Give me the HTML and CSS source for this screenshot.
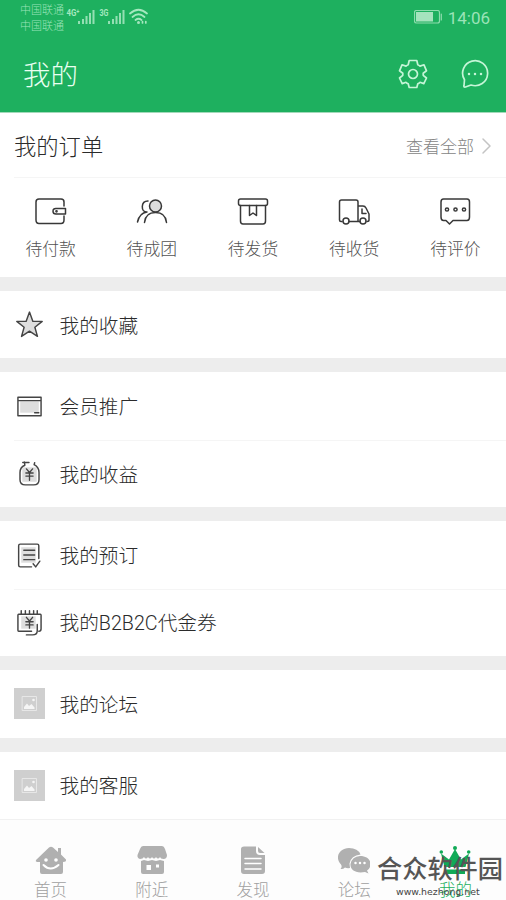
FILE: index.html
```html
<!DOCTYPE html>
<html lang="zh-CN">
<head>
<meta charset="utf-8">
<title>我的</title>
<link rel="stylesheet" href="styles.css">
</head>
<body>
<header class="top">
  <div class="status">
    <div class="carrier"><span>中国联通</span><span>中国联通</span></div>
    <svg class="signals" width="84" height="20" viewBox="66 6 84 20">
      <g class="net"><text x="66.500" y="16" textLength="13" lengthAdjust="spacingAndGlyphs">4G⁺</text><text x="99.500" y="16" textLength="9" lengthAdjust="spacingAndGlyphs">3G</text></g>
      <path class="bars" d="M79 24v-3M83 24v-5M86.500 24v-8M90 24v-11M93.500 24v-14M109 24v-3M113 24v-5M116.500 24v-8M120 24v-11M123.500 24v-14"/>
      <path class="wifi" d="M130 13.500Q138.500 6 147 13.500M132.500 17Q138.500 11.500 144.500 17M135.500 20Q138.500 17.500 141.500 20"/>
      <circle class="dot" cx="138.500" cy="22.500" r="1.500"/><path class="wifi" d="M142.500 21.500v1.500M145.800 21.500v1.500"/>
    </svg>
    <div class="power">
      <svg width="28" height="14" viewBox="414 10 28 14"><rect class="shell" x="414.500" y="10.500" width="25" height="12.500" rx="2"/><rect class="dot" x="416" y="12" width="17" height="9.500"/><path class="shell" d="M441.300 14v6"/></svg>
      <span>14:06</span>
    </div>
  </div>
  <div class="titlebar">
    <h1>我的</h1>
    <svg class="hicon gear" width="30" height="30" viewBox="-15 -15 30 30"><path d="M-3.800-13.500H3.800L4.800-9.200Q6-8.700 7-7.900L11-9.200L13.500-3.200L10.200-.8V1.300L13.500 4L10.800 9.600L7 8.300Q6 9.200 4.800 9.700L3.800 13.500H-3.800L-4.800 9.700Q-6 9.200-7 8.300L-10.800 9.600L-13.500 4L-10.200 1.300V-.8L-13.500-3.200L-11-9.200L-7-7.900Q-6-8.700-4.800-9.200Z"/><circle r="4.500"/></svg>
    <svg class="hicon" width="30" height="30" viewBox="-15 -15 30 30"><path d="M-10.500 5.800A12.500 12.500 0 1 1-4 11L-9.500 13Q-11.500 13.500-11 11.500Z"/><path class="ellipsis" d="M-6 0h.01M0 0h.01M6 0h.01"/></svg>
  </div>
</header>
<main>
  <section class="orders">
    <div class="orders-head"><h2>我的订单</h2><a>查看全部</a><svg width="12" height="18" viewBox="0 0 12 18"><path d="M2 2L9 9L2 16"/></svg></div>
    <div class="steps">
      <div class="step"><svg viewBox="0 0 34 30"><path d="M30 9V5Q30 2 27 2H5Q2 2 2 5V23Q2 26.500 5 26.500H27Q30 26.500 30 23V19"/><path d="M22 11.500H31.500V17H22Q19 17 19 14.200T22 11.500Z"/><circle cx="22.500" cy="14.300" r=".6"/></svg><span>待付款</span></div>
      <div class="step"><svg viewBox="0 0 34 30"><circle class="tint" cx="20.500" cy="9" r="6"/><path d="M9.500 25.500Q10.500 15.500 20.500 15.500T31.500 25.500M13 4Q7.500 4 7.300 9.500T12 15Q4.500 16 2.500 25"/></svg><span>待成团</span></div>
      <div class="step"><svg viewBox="0 0 34 30"><rect x="2.500" y="2" width="29" height="6.500" rx="2"/><path d="M4.500 8.500V24Q4.500 27 7 27H27Q29.500 27 29.500 24V8.500M13.500 8.500V18.500L17 16L20.500 18.500V8.500"/></svg><span>待发货</span></div>
      <div class="step"><svg viewBox="0 0 34 30"><path d="M5 24.500H4Q2.500 24.500 2.500 23V5Q2.500 3 4.500 3H19Q21 3 21 5V24.500M12 24.500H23M21 9H26Q28 9 29 11L32 17V23Q32 24.500 30 24.500M25 12V16.500H29"/><circle cx="9" cy="24" r="3"/><circle cx="26" cy="24" r="3"/></svg><span>待收货</span></div>
      <div class="step"><svg viewBox="0 0 34 30"><path d="M5.500 2H29Q31.500 2 31.500 5V20Q31.500 23.500 29 23.500H15L11.500 27L8 23.500H5.500Q3 23.500 3 20V5Q3 2 5.500 2Z"/><circle cx="9" cy="12.500" r="1.600"/><circle cx="17.500" cy="12.500" r="1.600"/><circle cx="26" cy="12.500" r="1.600"/></svg><span>待评价</span></div>
    </div>
  </section>
  <section class="group">
    <div class="row"><svg viewBox="0 0 30 30"><path class="tint" d="M15 3L18.300 12H27.300L20.200 17.700L22.700 26.500L15 21.500L7.300 26.500L9.800 17.700L2.700 12H11.700Z"/></svg><span>我的收藏</span></div>
  </section>
  <section class="group">
    <div class="row"><svg viewBox="0 0 30 30"><path class="fill" d="M6 10H24V21H6Z"/><path d="M3.800 6H26.200V24H3.800ZM3.800 9.300H26.200M20 21H24"/></svg><span>会员推广</span></div>
    <div class="row"><svg viewBox="0 0 30 30"><path class="fill" d="M8 9H22V23H8Z"/><path d="M10 3.800L10.500 7Q5.800 9 5.800 14V21Q5.800 26 11 26H19Q24.200 26 24.200 21V14Q24.200 9 19.500 6.500M8.500 4.300H14.500M19.500 6.500L20 4.500"/><path class="yen" d="M12 10.500L15 14L18 10.500M11.500 14.500H18.500M11.500 17.500H18.500M15 14V21.500"/></svg><span>我的收益</span></div>
  </section>
  <section class="group">
    <div class="row"><svg viewBox="0 0 30 30"><path class="fill" d="M7 7H21V22H7Z"/><path d="M24 18V5.500Q24 4 22.500 4H6Q4.500 4 4.500 5.500V24.500Q4.500 26 6 26H17M18.500 23L21 26L25 20.500M9.500 10H20M9.500 14.500H20M9.500 19H20"/></svg><span>我的预订</span></div>
    <div class="row"><svg viewBox="0 0 30 30"><path class="fill" d="M7 9H21V21H7Z"/><path d="M17 23.500H4.500Q3.800 23.500 3.800 22.500V8Q3.800 7 4.500 7H25.500Q26.200 7 26.200 8V21Q26.200 23.500 24 23.500M7 3.500V7M11 3.500V7M15 3.500V7M19 3.500V7M22.500 3.500V7M22.500 17V23Q22.500 27 18 27H12"/><path class="yen" d="M12 10L15 13.500L18 10M11.500 14.300H18.500M11.500 17.300H18.500M15 13.500V20.500"/></svg><span>我的B2B2C代金券</span></div>
  </section>
  <section class="group">
    <div class="row"><svg class="photo" viewBox="0 0 31 31"><rect x="8.500" y="8.500" width="14" height="14"/><path d="M10 21V19L13 15.500L15 18L17.500 16L20.500 19.500V21Z"/><circle cx="19.500" cy="12" r="1.300"/></svg><span>我的论坛</span></div>
  </section>
  <section class="group">
    <div class="row"><svg class="photo" viewBox="0 0 31 31"><rect x="8.500" y="8.500" width="14" height="14"/><path d="M10 21V19L13 15.500L15 18L17.500 16L20.500 19.500V21Z"/><circle cx="19.500" cy="12" r="1.300"/></svg><span>我的客服</span></div>
  </section>
</main>
<nav class="tabs">
  <div class="tab"><svg viewBox="0 0 32 30"><path d="M1 15L14 2.500Q16 1 18 2.500L23 7V3H26V9.500L31 14.500Q31.500 17 28 17V27Q28 29 26 29H7Q5 29 5 27V17H2Q0 16.500 1 15Z"/><path class="cutline" d="M8.500 20Q15.500 27 23.500 20"/><circle class="cut" cx="11" cy="15" r="1.800"/><circle class="cut" cx="21" cy="15" r="1.800"/></svg><span>首页</span></div>
  <div class="tab"><svg viewBox="0 0 32 30"><path d="M7 1H26Q28 1 29 4L31 10Q31 14 27.500 14Q24.500 14 24 12Q22 15 20 12Q18 15 16 12Q14 15 12 12Q10 15 8 12Q7 14 4 14Q1 13 1.500 10L4 4Q5 1 7 1ZM5 16L8 15L12 16L16 15L20 16L24 15L28 16V27Q28 29 26 29H7Q5 29 5 27Z"/><path class="cut" d="M10.500 20H15V25H10.500ZM20 19.500H23V22.500H20Z"/></svg><span>附近</span></div>
  <div class="tab"><svg viewBox="0 0 32 30"><path d="M7 1.500H19V6Q19 10 23 10H28V26Q28 29 25 29H7Q4 29 4 26V4Q4 1.500 7 1.500ZM21 2L27.500 8H23Q21 8 21 6Z"/><path class="cutline thin" d="M8 13.500H24M8 18.500H24M8 24H24"/></svg><span>发现</span></div>
  <div class="tab"><svg viewBox="0 0 32 30"><path d="M2.500 24Q4.500 22 3 19.500C-4 12 2 3 11 3Q20 3 22.500 9.500Q13 10.500 11.500 18.500L12 23Q9 23.500 7 22.500Q5 24.500 2.500 24Z"/><path d="M22 11C34 11 35 22 29 25.500L30.500 28.500L27 27C17 29 12 24 12.500 19Q14 11.500 22 11Z"/><path class="cutdots" d="M17.500 18h.01M22 18h.01M26.500 18h.01"/></svg><span>论坛</span></div>
  <div class="tab active"><svg viewBox="0 0 32 30"><path d="M5.500 22L2 8.500L10 14.500L16 4L22 14.500L30 8.500L26.500 22ZM6 24.500H26V29H6Z"/><circle cx="16" cy="3" r="2"/><circle cx="2.300" cy="7" r="1.800"/><circle cx="29.700" cy="7" r="1.800"/></svg><span>我的</span></div>
  <div class="watermark"><strong>合众软件园</strong><span>www.hezhong.net</span></div>
</nav>
</body>
</html>
```
FILE: styles.css
```css
* { box-sizing: border-box; }
body {
  margin: 0;
  width: 506px;
  height: 900px;
  overflow: hidden;
  background: #fff;
  color: #2b2b2b;
  font-family: Roboto, "Noto Sans CJK SC", sans-serif;
  font-weight: 300;
}
h1, h2 { margin: 0; font-weight: 300; }
svg { display: block; flex: none; fill: none; stroke-linecap: round; stroke-linejoin: round; }

.top { height: 113px; background: #1eb05f; border-bottom: 1px solid #a3d9ba; color: #e9fff1; }
.status { display: flex; height: 36px; color: #9be3b8; }
.carrier { display: flex; flex-direction: column; width: 46px; margin-left: 20px; padding-top: 3px; font-size: 11px; line-height: 15.5px; white-space: nowrap; }
.signals { margin-top: 6px; }
.net { fill: #a5e8bf; font-size: 9.5px; font-weight: 700; }
.bars { stroke: #94dfb3; stroke-width: 2; stroke-linecap: butt; }
.wifi { stroke: #a5e8bf; stroke-width: 1.7; }
.dot { fill: #a5e3bd; }
.shell { stroke: #8ddcad; stroke-width: 1.2; }
.power { display: flex; gap: 6px; margin-left: auto; padding: 10px 16px 0 0; font-size: 17px; line-height: 16px; font-weight: 400; }
.titlebar { display: flex; align-items: center; height: 76px; padding: 0 16px 0 23px; }
.titlebar h1 { flex: 1; padding-top: 3px; font-size: 27.5px; line-height: 40px; }
.hicon { stroke: #c5f5d7; stroke-width: 1.7; }
.gear { margin-right: 32px; }
.ellipsis { stroke-width: 2.5; }

.orders { height: 164px; }
.orders-head { display: flex; align-items: center; height: 65px; margin-left: 14px; padding: 2px 13px 0 0; border-bottom: 1px solid #f5f5f5; }
.orders-head h2 { flex: 1; padding-top: 1px; font-size: 22.3px; line-height: 32px; }
.orders-head a { margin-right: 7px; color: #858585; font-size: 17px; line-height: 24px; padding-top: 1px; }
.orders-head svg { stroke: #c4c4c4; stroke-width: 1.5; }
.steps { display: grid; grid-template-columns: repeat(5, 1fr); padding-top: 19px; }
.step { display: flex; flex-direction: column; align-items: center; gap: 10px; color: #525252; font-size: 16.8px; line-height: 24px; }
.step svg { width: 34px; height: 30px; stroke: #383838; stroke-width: 1.5; }

.group { padding-top: 14px; background: #ededed; }
.group .row { display: flex; align-items: center; height: 67.45px; padding-left: 14px; background: #fff; font-size: 19.7px; }
.row span { padding-bottom: 1px; }
.group .row + .row { background: linear-gradient(#f5f5f5, #f5f5f5) 14px 0 / 492px 1px no-repeat #fff; }
.row svg { width: 31px; height: 31px; margin-right: 14.5px; stroke: #444; stroke-width: 1.4; }
.row svg .fill { fill: #dedede; stroke: none; }
.tint { fill: #dedede; }
.row svg .yen { stroke-width: 1.3; }
.row .photo { background: #cfcfcf; stroke: #e7e7e7; stroke-width: 1; }
.photo path, .photo circle { fill: #f5f5f5; stroke: none; }

.tabs { position: relative; display: grid; grid-template-columns: repeat(5, 1fr); height: 82px; padding-top: 25px; background: #fdfdfd; border-top: 1px solid #f1f1f1; }
.tab { display: flex; flex-direction: column; align-items: center; color: #a0a0a0; font-size: 16.5px; line-height: 24px; gap: 4px; }
.tab svg { width: 32px; height: 30px; fill: #b0b0b0; }
.tab .cut { fill: #fff; }
.tab .cutline { fill: none; stroke: #fff; stroke-width: 2; }
.tab .thin { stroke-width: 1.5; }
.tab .cutdots { stroke: #fff; stroke-width: 2.5; }
.tab.active { color: #1eb05f; }
.tab.active svg { fill: #11aa57; }
.watermark { position: absolute; top: 34px; left: 377px; width: 126px; display: flex; flex-direction: column; color: #555; white-space: nowrap; }
.watermark strong { font-size: 25.2px; line-height: 32px; font-weight: 500; }
.watermark span { padding-left: 19px; font: 400 9.4px/12px "DejaVu Sans", sans-serif; color: #444; }
```
